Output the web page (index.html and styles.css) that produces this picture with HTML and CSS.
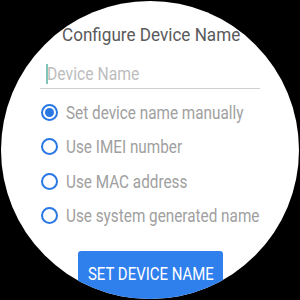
FILE: index.html
```html
<!DOCTYPE html>
<html lang="en">
<head>
    <meta charset="UTF-8">
    <meta name="viewport" content="width=device-width, initial-scale=1.0">
    <title>Configure Device Name</title>
    <link rel="stylesheet" href="styles.css">
</head>
<body>
    <div class="watch">
        <div class="screen">
            <h1 class="title"><span class="narrow">Configure Device Name</span></h1>

            <div class="name-field">
                <span class="caret"></span>
                <span class="placeholder narrow">Device Name</span>
            </div>

            <div class="options">
                <label class="option">
                    <span class="radio checked"></span>
                    <span class="option-text narrow">Set device name manually</span>
                </label>
                <label class="option">
                    <span class="radio"></span>
                    <span class="option-text narrow">Use IMEI number</span>
                </label>
                <label class="option">
                    <span class="radio"></span>
                    <span class="option-text narrow">Use MAC address</span>
                </label>
                <label class="option">
                    <span class="radio"></span>
                    <span class="option-text narrow">Use system generated name</span>
                </label>
            </div>

            <div class="actions">
                <button class="set-btn"><span class="narrow">SET DEVICE NAME</span></button>
            </div>
        </div>
    </div>
</body>
</html>
```

FILE: styles.css
```css
html, body {
    margin: 0;
    padding: 0;
    background-color: #000;
}
body {
    width: 300px;
    height: 300px;
    overflow: hidden;
    font-family: Roboto, 'Noto Sans', sans-serif;
}
.watch {
    width: 300px;
    height: 300px;
    display: flex;
    justify-content: center;
    align-items: center;
}
.screen {
    width: 298px;
    height: 298px;
    border-radius: 50%;
    background-color: #fff;
    overflow: hidden;
    display: flex;
    flex-direction: column;
}
/* the watch font is a narrow Roboto */
.narrow {
    display: inline-block;
    transform: scaleX(0.85);
    transform-origin: left center;
    white-space: nowrap;
}
.title {
    margin: 22px 0 0;
    height: 24px;
    font-size: 19px;
    font-weight: 400;
    line-height: 24px;
    color: #5a5a5a;
    padding-left: 61px;
}
.title .narrow {
    transform: scaleX(0.9);
}
.name-field {
    margin: 13px 39px 0;
    height: 30px;
    border-bottom: 1px solid #cfcfcf;
    display: flex;
    align-items: center;
    padding-left: 6px;
}
.caret {
    width: 2px;
    height: 20px;
    background-color: #7fc6b9;
    margin-right: -1px;
}
.placeholder {
    font-size: 18.5px;
    color: #bdbdbd;
}
.options {
    margin: 6px 0 0 40px;
    display: flex;
    flex-direction: column;
}
.option {
    height: 34.5px;
    display: flex;
    align-items: center;
}
.radio {
    width: 13px;
    height: 13px;
    border: 2px solid #2a78e4;
    border-radius: 50%;
    position: relative;
    margin-right: 8px;
    flex-shrink: 0;
}
.radio.checked::after {
    content: '';
    position: absolute;
    left: 2px;
    top: 2px;
    width: 9px;
    height: 9px;
    border-radius: 50%;
    background-color: #2a78e4;
}
.option-text {
    font-size: 18px;
    color: #a0a0a0;
}
.actions {
    display: flex;
    justify-content: center;
    margin-top: 18px;
}
.set-btn {
    width: 145px;
    height: 48px;
    border: none;
    border-radius: 3px;
    background-color: #2f80ed;
    color: #fff;
    font-family: Roboto, sans-serif;
    font-size: 18px;
    padding: 0 0 4px 10px;
    text-align: left;
}
.set-btn .narrow {
    transform: scaleX(0.83);
}
```
